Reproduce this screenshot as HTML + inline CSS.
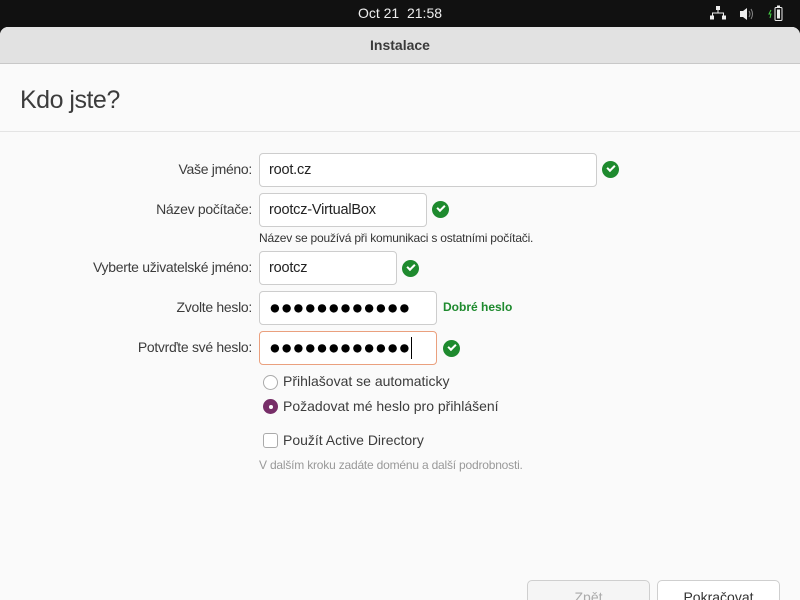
<!DOCTYPE html><html><head><meta charset="utf-8"><style>
*{box-sizing:border-box;margin:0;padding:0}
body{width:800px;height:600px;overflow:hidden;background:#111;font-family:"Liberation Sans","DejaVu Sans",sans-serif;position:relative;color:#333}
.top{position:absolute;left:0;top:0;width:800px;height:27px;background:#111;color:#eee;font-size:14px;text-align:center;line-height:27px}
.win{position:absolute;left:0;top:27px;width:800px;height:573px;background:#fafafa;border-radius:8px 8px 0 0;overflow:hidden}
.tb{height:37px;background:#e2e2e2;border-bottom:1px solid #c8c8c8;text-align:center;line-height:37px;font-size:14px;font-weight:bold;color:#3a3a3a}
h1{position:absolute;left:20px;top:59px;font-size:25px;font-weight:normal;color:#3c3c3c;letter-spacing:-0.5px}
.sep{position:absolute;left:0;top:104px;width:800px;border-top:1px solid #e4e4e4}
.lbl{position:absolute;right:548px;font-size:14px;color:#3c3c3c;letter-spacing:-0.3px;white-space:nowrap}
.in{position:absolute;left:259px;height:34px;border:1px solid #cdcdcd;border-radius:4px;background:#fff;font-size:14.5px;padding-left:9px;line-height:32px;color:#222;letter-spacing:-0.2px}
.ok{position:absolute;width:17px;height:17px;border-radius:50%;background:#1e8a2e}
.ok:after{content:"";position:absolute;left:5px;top:4px;width:6px;height:3px;border-left:2px solid #fff;border-bottom:2px solid #fff;transform:rotate(-45deg)}
.dots{font-size:19.5px;letter-spacing:0;color:#000}
.sm{position:absolute;font-size:12px;color:#333;letter-spacing:-0.2px}
.rad{position:absolute;left:263px;width:15px;height:15px;border-radius:50%;border:1px solid #aaa;background:#fff}
.opt{position:absolute;left:283px;font-size:14px;color:#3c3c3c}
.btn{position:absolute;top:553px;height:40px;border:1px solid #cfcfcf;border-radius:5px;font-size:14px;text-align:center;padding-top:8px}
</style></head><body>
<div class="top">Oct 21&nbsp; 21:58
<svg style="position:absolute;left:710px;top:6px" width="16" height="14"><rect x="6" y="0" width="4" height="4" fill="#eee"/><rect x="7.5" y="4" width="1" height="3" fill="#eee"/><rect x="2" y="6.5" width="12" height="1" fill="#eee"/><rect x="2" y="6.5" width="1" height="3" fill="#eee"/><rect x="13" y="6.5" width="1" height="3" fill="#eee"/><rect x="0" y="9.5" width="4" height="4" fill="#eee"/><rect x="12" y="9.5" width="4" height="4" fill="#eee"/></svg>
<svg style="position:absolute;left:739px;top:7px" width="16" height="14"><path d="M1 4h3l4-3v12l-4-3H1z" fill="#eee"/><path d="M10 4q2 3 0 6M12 2q3 5 0 10" stroke="#888" fill="none"/></svg>
<svg style="position:absolute;left:768px;top:5px" width="16" height="17"><path d="M3 5l-2 4h2l-1 4" stroke="#4c4" fill="none"/><rect x="7" y="2.5" width="7" height="13" rx="1" stroke="#eee" fill="none"/><rect x="9" y="4.5" width="3" height="9" fill="#eee"/><rect x="9" y="0.5" width="3" height="2" fill="#eee"/></svg>
</div>
<div class="win">
<div class="tb">Instalace</div>
<h1>Kdo jste?</h1>
<div class="sep"></div>
<div class="lbl" style="top:134px">Vaše jméno:</div>
<div class="in" style="top:126px;width:338px">root.cz</div>
<div class="ok" style="left:602px;top:134px"></div>
<div class="lbl" style="top:174px">Název počítače:</div>
<div class="in" style="top:166px;width:168px">rootcz-VirtualBox</div>
<div class="ok" style="left:432px;top:174px"></div>
<div class="sm" style="left:259px;top:204px">Název se používá při komunikaci s ostatními počítači.</div>
<div class="lbl" style="top:232px">Vyberte uživatelské jméno:</div>
<div class="in" style="top:224px;width:138px">rootcz</div>
<div class="ok" style="left:402px;top:233px"></div>
<div class="lbl" style="top:272px">Zvolte heslo:</div>
<div class="in dots" style="top:264px;width:178px">●●●●●●●●●●●●</div>
<div style="position:absolute;left:443px;top:273px;font-size:12px;font-weight:bold;color:#1e8a2e">Dobré heslo</div>
<div class="lbl" style="top:312px">Potvrďte své heslo:</div>
<div class="in dots" style="top:304px;width:178px;border-color:#eaa07e">●●●●●●●●●●●●<span style="border-left:1px solid #000;margin-left:1px"></span></div>
<div class="ok" style="left:443px;top:313px"></div>
<div class="rad" style="top:348px"></div>
<div class="opt" style="top:346px">Přihlašovat se automaticky</div>
<div class="rad" style="top:372px;background:#772e68;border-color:#772e68"><div style="position:absolute;left:4.5px;top:4.5px;width:4px;height:4px;border-radius:50%;background:#fff"></div></div>
<div class="opt" style="top:371px">Požadovat mé heslo pro přihlášení</div>
<div class="rad" style="top:406px;border-radius:3px"></div>
<div class="opt" style="top:405px">Použít Active Directory</div>
<div class="sm" style="left:259px;top:431px;color:#999">V dalším kroku zadáte doménu a další podrobnosti.</div>
<div class="btn" style="left:527px;width:123px;color:#aaa;background:#f5f5f5">Zpět</div>
<div class="btn" style="left:657px;width:123px;color:#333;background:#fff">Pokračovat</div>
</div>
</body></html>
